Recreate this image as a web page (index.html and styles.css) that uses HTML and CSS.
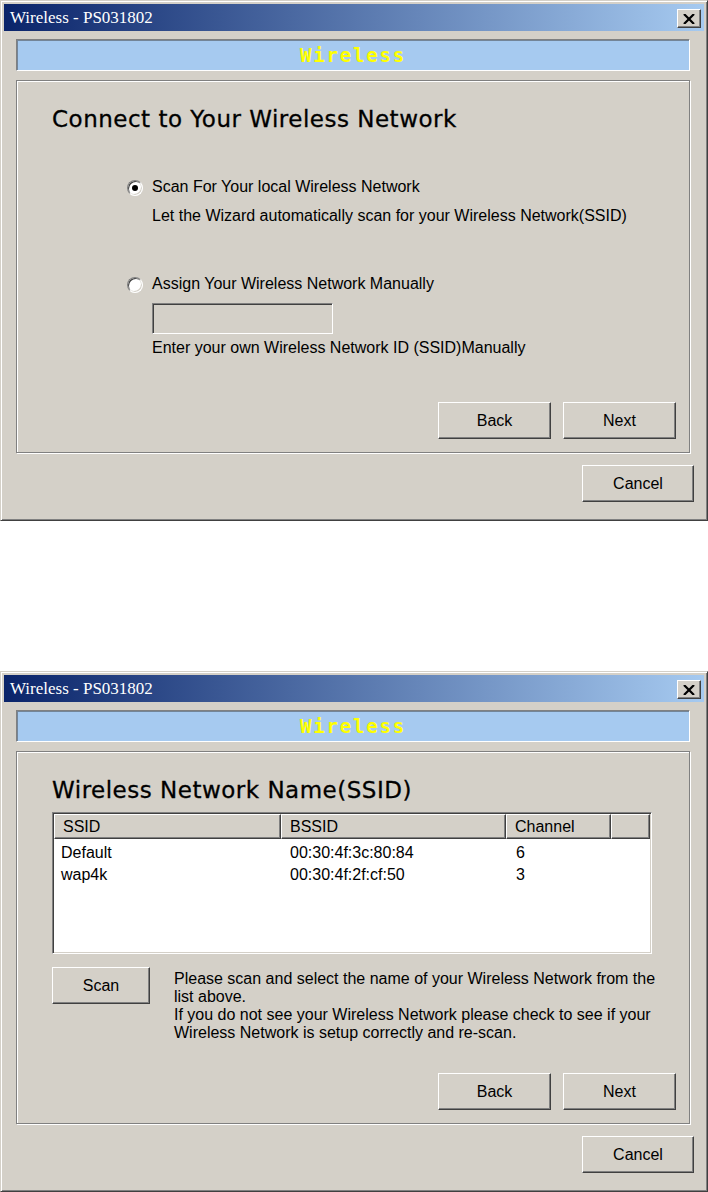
FILE: index.html
```html
<!DOCTYPE html>
<html lang="en">
<head>
    <meta charset="UTF-8">
    <meta name="viewport" content="width=device-width, initial-scale=1.0">
    <title>Wireless - PS031802</title>
    <link rel="stylesheet" href="styles.css">
</head>
<body>
    <!-- step 1: choose how to find the network -->
    <div class="window">
        <div class="titlebar">
            <span class="title">Wireless - PS031802</span>
            <button class="close-btn" aria-label="Close">
                <svg width="12" height="10" viewBox="0 0 12 10"><path d="M1 0 L11 10 M11 0 L1 10" stroke="#000" stroke-width="2.2"/></svg>
            </button>
        </div>
        <div class="client">
            <div class="banner">Wireless</div>
            <div class="group">
                <h1 class="heading">Connect to Your Wireless Network</h1>
                <div class="options">
                    <div class="option">
                        <span class="radio checked"></span>
                        <div class="option-body">
                            <div class="label">Scan For Your local Wireless Network</div>
                            <div class="hint">Let the Wizard automatically scan for your Wireless Network(SSID)</div>
                        </div>
                    </div>
                    <div class="option option-manual">
                        <span class="radio"></span>
                        <div class="option-body">
                            <div class="label">Assign Your Wireless Network Manually</div>
                            <div class="textbox"></div>
                            <div class="hint hint-tight">Enter your own Wireless Network ID (SSID)Manually</div>
                        </div>
                    </div>
                </div>
                <div class="nav-row">
                    <button class="btn">Back</button>
                    <button class="btn">Next</button>
                </div>
            </div>
            <div class="footer">
                <button class="btn btn-cancel">Cancel</button>
            </div>
        </div>
    </div>

    <!-- step 2: pick a scanned network -->
    <div class="window">
        <div class="titlebar">
            <span class="title">Wireless - PS031802</span>
            <button class="close-btn" aria-label="Close">
                <svg width="12" height="10" viewBox="0 0 12 10"><path d="M1 0 L11 10 M11 0 L1 10" stroke="#000" stroke-width="2.2"/></svg>
            </button>
        </div>
        <div class="client">
            <div class="banner">Wireless</div>
            <div class="group">
                <h1 class="heading">Wireless Network Name(SSID)</h1>
                <div class="list">
                    <div class="list-head">
                        <div class="col-head">SSID</div>
                        <div class="col-head">BSSID</div>
                        <div class="col-head">Channel</div>
                        <div class="col-head"></div>
                    </div>
                    <div class="list-body">
                        <div class="list-row">
                            <span>Default</span>
                            <span>00:30:4f:3c:80:84</span>
                            <span>6</span>
                        </div>
                        <div class="list-row">
                            <span>wap4k</span>
                            <span>00:30:4f:2f:cf:50</span>
                            <span>3</span>
                        </div>
                    </div>
                </div>
                <div class="scan-row">
                    <button class="btn btn-scan">Scan</button>
                    <p class="scan-text">Please scan and select the name of your Wireless Network from the list above.<br>If you do not see your Wireless Network please check to see if your Wireless Network is setup correctly and re-scan.</p>
                </div>
                <div class="nav-row">
                    <button class="btn">Back</button>
                    <button class="btn">Next</button>
                </div>
            </div>
            <div class="footer">
                <button class="btn btn-cancel">Cancel</button>
            </div>
        </div>
    </div>
</body>
</html>
```

FILE: styles.css
```css
* {
    margin: 0;
    padding: 0;
    box-sizing: border-box;
}

body {
    font-family: "Liberation Sans", Arial, sans-serif;
    font-size: 16px;
    line-height: 18px;
    color: #000;
    background: #fff;
    width: 708px;
}

.window {
    width: 708px;
    height: 521px;
    background: #d4d0c8;
    border: 1px solid;
    border-color: #d4d0c8 #404040 #404040 #d4d0c8;
    box-shadow: inset 1px 1px #fff, inset -1px -1px #808080;
    padding: 3px;
    display: flex;
    flex-direction: column;
}

.window + .window {
    margin-top: 150px;
}

.titlebar {
    height: 27px;
    display: flex;
    align-items: center;
    padding: 0 3px 0 6px;
    background: linear-gradient(to right, #0a246a, #a6caf0);
}

.title {
    font-family: "Liberation Serif", "Times New Roman", serif;
    font-size: 17px;
    color: #fff;
}

.close-btn {
    margin-left: auto;
    margin-top: 2px;
    width: 24px;
    height: 19px;
    display: flex;
    align-items: center;
    justify-content: center;
    background: #d4d0c8;
    border: 1px solid;
    border-color: #fff #404040 #404040 #fff;
    box-shadow: inset -1px -1px #808080;
}

.client {
    flex: 1;
    display: flex;
    flex-direction: column;
    padding: 8px 10px 0 12px;
}

.banner {
    height: 32px;
    margin-right: 4px;
    display: flex;
    align-items: center;
    justify-content: center;
    background: #a6caf0;
    border: 1px solid;
    border-color: #808080 #fff #fff #808080;
    box-shadow: inset 1px 1px rgba(64, 64, 64, 0.5);
    font-family: "DejaVu Sans Mono", monospace;
    font-weight: bold;
    font-size: 19px;
    letter-spacing: 1.8px;
    color: #ffff00;
}

.group {
    height: 373px;
    margin: 9px 4px 0 0;
    padding: 25px 13px 13px 35px;
    border: 1px solid #808080;
    box-shadow: inset 1px 1px #fff, 1px 1px #fff;
    display: flex;
    flex-direction: column;
}

.heading {
    font-family: "DejaVu Sans", Verdana, sans-serif;
    font-weight: normal;
    font-size: 23px;
    line-height: 26px;
    letter-spacing: 0.5px;
    -webkit-text-stroke: 0.3px #000;
}

.options {
    margin: 46px 0 0 75px;
}

.option {
    display: flex;
    gap: 9px;
}

.option-manual {
    margin-top: 50px;
}

.radio {
    width: 16px;
    height: 16px;
    margin-top: 2px;
    flex-shrink: 0;
    border-radius: 50%;
    border: 1px solid;
    border-color: #808080 #fff #fff #808080;
    box-shadow: inset 1px 1px #404040, inset -1px -1px #d4d0c8;
    background: #fff;
    display: flex;
    align-items: center;
    justify-content: center;
}

.radio.checked::after {
    content: '';
    width: 6px;
    height: 6px;
    border-radius: 50%;
    background: #000;
}

.hint {
    margin-top: 11px;
}

.hint-tight {
    margin-top: 5px;
}

.textbox {
    width: 181px;
    height: 31px;
    margin-top: 10px;
    background: #d4d0c8;
    border: 1px solid;
    border-color: #808080 #fff #fff #808080;
    box-shadow: inset 1px 1px #404040, inset -1px -1px #d4d0c8;
}

.nav-row {
    margin-top: auto;
    display: flex;
    justify-content: flex-end;
    gap: 12px;
}

.footer {
    margin-top: 12px;
    display: flex;
    justify-content: flex-end;
}

.btn {
    width: 113px;
    height: 37px;
    font-family: "Liberation Sans", Arial, sans-serif;
    font-size: 16px;
    color: #000;
    background: #d4d0c8;
    border: 1px solid;
    border-color: #fff #404040 #404040 #fff;
    box-shadow: inset -1px -1px #808080;
}

.btn-cancel {
    width: 112px;
}

.btn-scan {
    width: 98px;
    flex-shrink: 0;
}

/* list view */

.list {
    width: 600px;
    height: 142px;
    margin-top: 9px;
    padding: 1px;
    background: #fff;
    border: 1px solid;
    border-color: #808080 #fff #fff #808080;
    box-shadow: inset 1px 1px #404040, inset -1px -1px #d4d0c8;
}

.list-head {
    display: grid;
    grid-template-columns: 227px 225px 105px 1fr;
    height: 25px;
}

.col-head {
    line-height: 23px;
    padding-left: 8px;
    background: #d4d0c8;
    border: 1px solid;
    border-color: #fff #404040 #404040 #fff;
    box-shadow: inset -1px -1px #808080;
}

.list-body {
    padding-top: 3px;
}

.list-row {
    display: grid;
    grid-template-columns: 229px 226px 1fr;
    line-height: 22px;
}

.list-row span {
    padding-left: 7px;
}

.scan-row {
    margin-top: 13px;
    display: flex;
    gap: 24px;
}

.scan-text {
    width: 490px;
    margin-top: 3px;
}
```
